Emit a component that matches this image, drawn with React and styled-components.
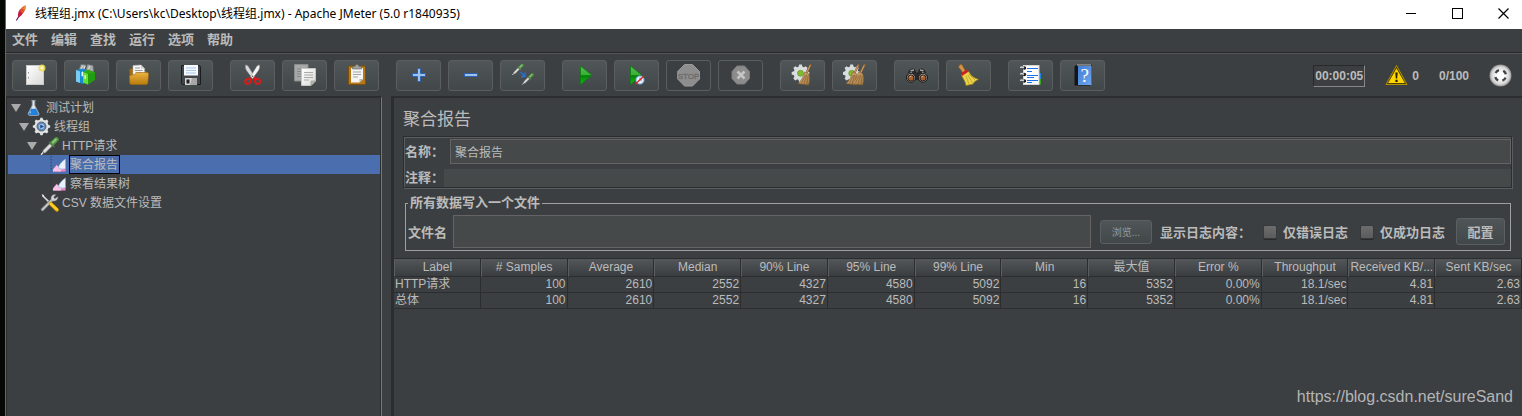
import React, { useState } from "react";
import styled, { createGlobalStyle } from "styled-components";

const GlobalStyle = createGlobalStyle`
  * {
    box-sizing: border-box;
  }

  body {
    margin: 0;
    background: #050805;
    color: #bbbbbb;
    font-family: "Liberation Sans", "Noto Sans CJK SC", sans-serif;
    font-size: 12px;
    overflow: hidden;
  }

  button,
  input {
    font-family: inherit;
    color: inherit;
    margin: 0;
  }
`;

const Gradients = () => (
  <GradientDefs width="0" height="0" aria-hidden="true">
    <defs>
      <linearGradient id="green" x1="0" y1="0" x2="0" y2="1">
        <stop offset="0" stopColor="#4fc34a" />
        <stop offset="0.48" stopColor="#3aae35" />
        <stop offset="0.52" stopColor="#067f08" />
        <stop offset="1" stopColor="#12c416" />
      </linearGradient>
      <linearGradient id="gold" x1="0" y1="0" x2="0" y2="1">
        <stop offset="0" stopColor="#e9b341" />
        <stop offset="1" stopColor="#b97c0c" />
      </linearGradient>
      <linearGradient id="paper" x1="0" y1="0" x2="1" y2="1">
        <stop offset="0" stopColor="#ffffff" />
        <stop offset="1" stopColor="#d9d9d6" />
      </linearGradient>
      <linearGradient id="blue" x1="0" y1="0" x2="1" y2="1">
        <stop offset="0" stopColor="#3f7fd6" />
        <stop offset="1" stopColor="#6fa6ee" />
      </linearGradient>
      <linearGradient id="straw" x1="0" y1="0" x2="1" y2="1">
        <stop offset="0" stopColor="#d8b27c" />
        <stop offset="1" stopColor="#a37843" />
      </linearGradient>
      <radialGradient id="silver">
        <stop offset="0.3" stopColor="#ffffff" />
        <stop offset="0.8" stopColor="#d4d4d4" />
        <stop offset="1" stopColor="#8a8a8a" />
      </radialGradient>
    </defs>
  </GradientDefs>
);

const gearTeeth = [0, 45, 90, 135, 180, 225, 270, 315];

const Gear = ({ x, y, r, fill }) => (
  <g transform={`translate(${x} ${y})`} fill={fill}>
    {gearTeeth.map((a) => (
      <path
        key={a}
        transform={`rotate(${a})`}
        d={`M-2.2 ${-r + 1} L-1.3 ${-r - 2} H1.3 L2.2 ${-r + 1}Z`}
      />
    ))}
    <circle r={r} />
  </g>
);

const Pipette = ({ x = 0, y = 0, s = 1 }) => (
  <g transform={`translate(${x} ${y}) scale(${s})`} strokeLinecap="round">
    <path d="M1 17 L4 13.5" stroke="#e8e8e8" strokeWidth="1.4" />
    <path d="M4 14 L10.5 7.5" stroke="#777" strokeWidth="4" />
    <path d="M4 14 L10.5 7.5" stroke="#dcdedb" strokeWidth="2.6" />
    <path d="M9 5.5 L13 9.5" stroke="#5a6b55" strokeWidth="1.8" />
    <path d="M12 6 L15.5 2.5" stroke="#4f9140" strokeWidth="4.6" />
    <path d="M12 5.5 L15 2.5" stroke="#8cc878" strokeWidth="2" />
  </g>
);

const Broom = ({ x = 0 }) => (
  <g transform={`translate(${x} 0)`}>
    <path d="M19.5 1 L15.5 9" stroke="#8e6231" strokeWidth="2" strokeLinecap="round" />
    <path d="M19.2 1.3 L15.5 9" stroke="#cfa26a" strokeWidth="1" />
    <path d="M13.5 8 L17.5 9.5 C19 13 19 17 17.5 21 L7 19.5 C10 17 12.5 13 13.5 8Z" fill="url(#straw)" stroke="#80582b" strokeWidth="0.5" />
    <path d="M14.5 11 L10.5 19 M15.7 11 L13 20 M17 12 L16 20.5" stroke="#7d5529" strokeWidth="0.6" fill="none" />
  </g>
);

const icons = {
  new: (
    <>
      <rect x="3.5" y="1.5" width="17" height="19" fill="url(#paper)" stroke="#c9c9c9" />
      <path d="M5.5 8 v1.5 M5.5 13 v1.5" stroke="#999" />
      <circle cx="19" cy="4" r="3.5" fill="#f0dd51" opacity="0.85" />
      <circle cx="19" cy="4" r="1.7" fill="#fffcc8" />
    </>
  ),
  templates: (
    <>
      <path d="M4 6 L6 0.5 L11 1 L9 7Z M11 6 L12.5 0.5 L18 1.5 L18.5 8Z" fill="#a9adad" stroke="#707575" strokeWidth="0.6" />
      <path d="M6 5 L8 1.5 M13 5.5 L15 2 M9 5 L10 2" stroke="#e5e5e5" strokeWidth="0.9" />
      <path d="M1 6 L8 4.5 L12 6.5 V18 L8 20 L1 17.5Z" fill="#158bd0" />
      <path d="M1 6 L5 7.5 V19 L1 17.5Z" fill="#7ccaf1" />
      <path d="M6.5 8 L8 7.5 V12 L6.5 12.5Z" fill="#e8f8ff" />
      <path d="M8 8 L13 5.5 L20 8.5 V15.5 L13 20.5 L8 18.5Z" fill="#2eaa15" />
      <path d="M8 8 L13 10 V20.5 L8 18.5Z" fill="#68de35" />
      <path d="M9.5 11 L11 11.5 V15 L9.5 14.5Z" fill="#e5ffd5" />
      <path d="M13 10 L20 8.5 V15.5 L13 20.5Z" fill="#219d10" />
    </>
  ),
  open: (
    <>
      <path d="M2.5 5 L6 4.5 L8 7 H19 V18 H3Z" fill="#a46c10" />
      <path d="M6 1.5 L14 1 L17.5 4.5 V13 H6Z" fill="#f5f5f5" stroke="#bbb" strokeWidth="0.5" />
      <path d="M14 1 V4.5 H17.5" fill="#ccc" />
      <path d="M8 4 H13 M8 6.5 H15.5 M8 9 H15.5" stroke="#999" />
      <path d="M2.5 12 Q3 11 8 10.5 L9.5 8.5 H20 Q22 8.5 21.5 10.5 L20.8 19 Q20.5 20.5 19 20.5 H4.5 Q3 20.5 2.8 19Z" fill="url(#gold)" stroke="#a06c10" strokeWidth="0.6" />
    </>
  ),
  save: (
    <>
      <path d="M2.5 1.5 H20.5 L21.5 3 V20.5 H3.5 L2.5 19Z" fill="#42454a" stroke="#1c1d20" />
      <path d="M5 1 H19 V11.5 H5Z" fill="#f7fbff" />
      <path d="M7 4 H17 M7 6.5 H17 M7 9 H17" stroke="#a5c7e9" />
      <path d="M6 14 H18 V21 H6Z" fill="#d3d3d3" />
      <rect x="7.5" y="15.5" width="3" height="4" fill="#222" />
      <path d="M13 14 H18 V21 H11Z" fill="#a7a7a7" />
    </>
  ),
  cut: (
    <>
      <path d="M9.5 15 L13 13.5 L14 15.5" stroke="#d61b1b" strokeWidth="2.4" fill="none" />
      <path d="M4.8 0.8 Q3.6 3 5.5 6.5 L11.5 14.5 L13.5 12.5 L7 2Z" fill="#dcdcdc" stroke="#8b8b8b" strokeWidth="0.5" />
      <path d="M18.2 0.8 Q19.4 3 17.5 6.5 L11.5 14.5 L9.5 12.5 L16 2Z" fill="#f6f6f6" stroke="#8b8b8b" strokeWidth="0.5" />
      <ellipse cx="7" cy="17.3" rx="2.7" ry="2.4" transform="rotate(-30 7 17.3)" fill="#4a4e50" stroke="#dc1a1a" strokeWidth="2" />
      <ellipse cx="16.5" cy="17.3" rx="2.7" ry="2.4" transform="rotate(30 16.5 17.3)" fill="#4a4e50" stroke="#dc1a1a" strokeWidth="2" />
      <circle cx="11.5" cy="12.3" r="0.8" fill="#555" />
    </>
  ),
  copy: (
    <>
      <path d="M1.5 0.5 H15 V17 H1.5Z" fill="#a7a9a9" stroke="#8a8c8c" />
      <path d="M4 5 H12 M4 7.5 H12 M4 10 H12 M4 12.5 H10" stroke="#858787" />
      <path d="M8.5 4.5 H22.5 V17 L18 21.5 H8.5Z" fill="url(#paper)" stroke="#c4c4c4" />
      <path d="M11 8.5 H20 M11 11 H20 M11 13.5 H20 M11 16 H16" stroke="#aaa" />
      <path d="M22.5 17 H18 V21.5Z" fill="#bdbdb5" stroke="#8d8d87" strokeWidth="0.6" />
    </>
  ),
  paste: (
    <>
      <rect x="3.5" y="2" width="17" height="18.5" rx="1" fill="#b97817" stroke="#7d4f0c" />
      <path d="M6 4 H18 V15 L14.5 18.5 H6Z" fill="#f4f4f4" />
      <path d="M8 8 H16 M8 10.5 H16 M8 13 H13" stroke="#a5a5a5" />
      <path d="M18 15 H14.5 V18.5Z" fill="#b8b8b0" />
      <path d="M7.5 2.5 H10 Q10 0.5 12 0.5 T14 2.5 H16.5 V5 H7.5Z" fill="#a0a29e" stroke="#62645f" strokeWidth="0.6" />
    </>
  ),
  plus: (
    <path d="M10.5 4.5 H13.5 V9.5 H18.5 V12.5 H13.5 V17.5 H10.5 V12.5 H5.5 V9.5 H10.5Z" fill="#9cc3ef" stroke="#2d62b3" />
  ),
  minus: <rect x="5.5" y="9.5" width="13" height="3" fill="#9cc3ef" stroke="#2d62b3" />,
  toggle: (
    <>
      <Pipette x={1} y={-0.5} s={0.66} />
      <Pipette x={11} y={9} s={0.66} />
      <path d="M9.5 8 L13 11.5 M14 8.5 V12.5 H10" stroke="#2370d8" strokeWidth="1.5" fill="none" />
    </>
  ),
  start: <path d="M7.5 2 V20.5 L19 11.2Z" fill="url(#green)" stroke="#0b7c10" strokeWidth="0.8" />,
  startNoPause: (
    <>
      <path d="M5.5 2 V20.5 L17 11.2Z" fill="url(#green)" stroke="#0b7c10" strokeWidth="0.8" />
      <circle cx="15" cy="16" r="4.2" fill="#e4eef8" stroke="#4d88c3" strokeWidth="0.9" />
      <path d="M15 16 V13.5 M15 16 H17" stroke="#446c95" strokeWidth="0.8" />
      <path d="M10.5 20 L19 12" stroke="#db2424" strokeWidth="1.4" />
    </>
  ),
  stop: (
    <>
      <path d="M7.5 0.5 H15.5 L22.5 7.5 V15 L15.5 22 H7.5 L0.7 15 V7.5Z" fill="#8e8e8e" stroke="#9a9a9a" />
      <text x="11.5" y="14.5" textAnchor="middle" fontFamily="Liberation Sans" fontSize="8" fill="#6c6c6c" stroke="#6c6c6c" strokeWidth="0.3">STOP</text>
    </>
  ),
  shutdown: (
    <>
      <path d="M8 2 H15.5 L20.5 7.5 V14.5 L15.5 20 H8 L3 14.5 V7.5Z" fill="#8c8c8c" stroke="#7c7c7c" />
      <path d="M8.5 7.5 L15.5 14.5 M15.5 7.5 L8.5 14.5" stroke="#c5c5c5" strokeWidth="2.6" />
    </>
  ),
  clear: (
    <>
      <Gear x={9.5} y={9.3} r={6.8} fill="#dadddd" />
      <circle cx="9.5" cy="9.3" r="3" fill="#7ebc2e" stroke="#608a39" strokeWidth="0.6" />
      <Broom />
    </>
  ),
  clearAll: (
    <>
      <Gear x={8.7} y={9.3} r={6.8} fill="#dadddd" />
      <circle cx="8.7" cy="9.3" r="3" fill="#7ebc2e" stroke="#608a39" strokeWidth="0.6" />
      <Broom x={-4} />
      <Broom x={2} />
    </>
  ),
  search: (
    <>
      <path d="M4.5 6.5 Q7 3.5 10 6 L10.5 9 H13.5 L14 6 Q17 3.500 19.500 6.500 L23 14 L18 18 L12 15 L6 18 L1 14Z" fill="#2a2c2b" stroke="#1a1b1a" strokeWidth="0.800" />
      <path d="M5.500 6.800 L9 6 M15 6 L18.500 6.800 M3 10.500 L7 8.500 M17 8.500 L21 10.500" stroke="#a4a6a5" strokeWidth="1.400" />
      <circle cx="6" cy="13.700" r="4.500" fill="#8f9190" stroke="#181818" />
      <circle cx="18" cy="13.700" r="4.500" fill="#8f9190" stroke="#181818" />
      <circle cx="6" cy="14" r="3" fill="#a65f31" stroke="#3b2518" />
      <circle cx="18" cy="14" r="3" fill="#a65f31" stroke="#3b2518" />
      <path d="M4.5 13 L6.5 12 M16.5 13 L18.5 12" stroke="#efb484" />
    </>
  ),
  broom: (
    <>
      <path d="M2.5 1 Q4 -0.5 5.5 1.5 L8.5 7 L6 9 L1.5 3Z" fill="#d1934a" stroke="#8a5520" strokeWidth="0.7" />
      <path d="M9.5 6.5 L12 8 C14 12 17 14 21.5 15.5 Q17 17 16 20 L9 21.5 C8.5 17 6 15 4.5 11Z" fill="#ead34b" stroke="#a48614" strokeWidth="0.7" />
      <path d="M9 12 L12 20 M11 11 L15.5 19 M12 10 L18 16" stroke="#b89a1d" strokeWidth="0.7" />
      <path d="M4 9.5 L9.5 5.5 L11.5 7.8 L5 12Z" fill="#d11f20" />
    </>
  ),
  functions: (
    <>
      <path d="M19 9 H22 V15 H19Z" fill="#2088dc" />
      <path d="M19 15 H22 V20.5 H19Z" fill="#35a51c" />
      <rect x="4.5" y="1.5" width="15.5" height="19" fill="#fff" stroke="#d3d3d3" />
      <path d="M8 4.500 H19 M8 7.500 H13 M8 11.500 H19 M8 13.500 H15 M8 16.500 H19 M8 18.500 H13" stroke="#1b70e2" />
      {[4, 10.5, 17].map((y) => (
        <g key={y}>
          <circle cx="5.5" cy={y} r="1.7" fill="#181818" />
          <path d={`M1.5 ${y} Q2 ${y - 2} 5 ${y}`} stroke="#d6d6d6" strokeWidth="1.3" fill="none" />
        </g>
      ))}
    </>
  ),
  help: (
    <>
      <path d="M3.5 2.5 L6 0.5 H20.5 V19 L19 21.5 H3.5Z" fill="#141518" />
      <path d="M6 1 H20" stroke="#ccd0d6" />
      <rect x="7" y="2" width="13.5" height="19" fill="url(#blue)" />
      <text x="13.7" y="18" textAnchor="middle" fontFamily="Liberation Serif" fontSize="19" fill="#fff">?</text>
    </>
  ),
  feather: (
    <>
      <path d="M4.5 21 L10 12" stroke="#622670" strokeWidth="1.6" />
      <path d="M7 17 C6 11 8 8 10 5 L14 10 C12 13 10 16 7 17Z" fill="#c01d49" />
      <path d="M9.5 8 C11 4 13 2 17 0.5 C18 5 16 8 13 12Z" fill="#e15428" />
      <path d="M13 5 Q14 3 17 0.5 Q18 4 15.5 6Z" fill="#e9942b" />
    </>
  ),
  flask: (
    <>
      <path d="M9 3 H14 M10 3 V9 L5 19 Q5 21 7 21 H16.5 Q18.5 21 18 19 L13 9 V3" fill="#e3eaee" stroke="#9aa5ab" strokeWidth="1.2" />
      <path d="M8.5 13 H14.5 L17.5 19 Q17.5 20.5 16 20.5 H7 Q5.5 20.5 5.5 19Z" fill="#2181dd" />
      <path d="M6.5 18 L8 15 V19Z" fill="#b5dcfb" />
    </>
  ),
  gear: (
    <>
      <Gear x={11.5} y={11.5} r={8.5} fill="#e0e2e3" />
      <circle cx="11.5" cy="11.5" r="5.5" fill="#5f88b8" stroke="#50585f" />
      <circle cx="11.5" cy="11.5" r="3.3" fill="#9cc1e9" />
      <path d="M10 9 L14.5 11.5 L10 14Z" fill="#254c87" />
    </>
  ),
  pipette: <Pipette x={0.5} y={1} s={1.25} />,
  report: (
    <>
      <path d="M1.5 0 V21" stroke="#30343a" strokeDasharray="2 2" />
      <path d="M4 21 V18 L9 12 L13 16 L21 15 V21Z" fill="#f18acb" />
      <path d="M4 19 L9 13 L15 18 V21 H4Z" fill="#fbc3e5" />
      <path d="M11 16 C13 11 15 8 21 4 V17 Q16 19 11 16Z" fill="#e9f2fb" stroke="#7ba8d1" strokeWidth="0.7" />
    </>
  ),
  tools: (
    <>
      <path d="M3 3 L12 12" stroke="#d9d9d9" strokeWidth="2" />
      <path d="M2 1.5 L5 2.5 L4 5Z" fill="#eee" />
      <path d="M3 20 L15 8" stroke="#777" strokeWidth="4" strokeLinecap="round" />
      <path d="M3 20 L15 8" stroke="#c9cbcb" strokeWidth="2.2" strokeLinecap="round" />
      <path d="M14 9 C12 5 15 1 19 2 L16.5 5 L18 7 L21.5 4.5 C22.5 8 18 11 14 9Z" fill="#d4d6d6" stroke="#808383" strokeWidth="0.6" />
      <path d="M13 13 L20.5 20.5" stroke="#c58e05" strokeWidth="4.6" strokeLinecap="round" />
      <path d="M13 13 L20.5 20" stroke="#ffce22" strokeWidth="3" strokeLinecap="round" />
    </>
  ),
  warning: (
    <>
      <path d="M11.5 1.5 L22 20.5 H1Z" fill="#4f4100" stroke="#b09100" strokeWidth="1" strokeLinejoin="round" />
      <path d="M11.5 4.5 L19.8 19 H3.2Z" fill="#ffd500" />
      <path d="M10.3 8.5 H12.7 L12.2 14.5 H10.8Z M10.4 15.8 H12.6 V18 H10.4Z" fill="#211c00" />
    </>
  ),
  remote: (
    <>
      <circle cx="11.5" cy="11.5" r="11" fill="url(#silver)" />
      <circle cx="11.5" cy="11.5" r="5.5" fill="none" stroke="#404446" strokeWidth="2.4" strokeDasharray="4.2 4.440" strokeDashoffset="-2.220" />
    </>
  ),
};

const Icon = ({ name, size = 23 }) => (
  <IconSvg width={size} height={size} viewBox="0 0 23 23" aria-hidden="true">
    {icons[name]}
  </IconSvg>
);

const menus = ["文件", "编辑", "查找", "运行", "选项", "帮助"];

const toolGroups = [
  ["new", "templates", "open", "save"],
  ["cut", "copy", "paste"],
  ["plus", "minus", "toggle"],
  ["start", "startNoPause", "stop", "shutdown"],
  ["clear", "clearAll"],
  ["search", "broom"],
  ["functions", "help"],
];

const disabledTools = ["stop", "shutdown"];

const treeNodes = [
  { text: "测试计划", icon: "flask", level: 0, open: true },
  { text: "线程组", icon: "gear", level: 1, open: true },
  { text: "HTTP请求", icon: "pipette", level: 2, open: true },
  { text: "聚合报告", icon: "report", level: 3, leaf: true },
  { text: "察看结果树", icon: "report", level: 3, leaf: true },
  { text: "CSV 数据文件设置", icon: "tools", level: 2 },
];

const columns = [
  "Label",
  "# Samples",
  "Average",
  "Median",
  "90% Line",
  "95% Line",
  "99% Line",
  "Min",
  "最大值",
  "Error %",
  "Throughput",
  "Received KB/...",
  "Sent KB/sec",
];

const stats = ["100", "2610", "2552", "4327", "4580", "5092", "16", "5352", "0.00%", "18.1/sec", "4.81", "2.63"];

const rows = [
  ["HTTP请求", ...stats],
  ["总体", ...stats],
];

const App = () => {
  const [selected, setSelected] = useState("聚合报告");
  const [name, setName] = useState("聚合报告");

  return (
    <Desktop>
      <GlobalStyle />
      <Gradients />
      <Window>
        <TitleBar>
          <Icon name="feather" size={17} />
          <WindowTitle>线程组.jmx (C:\Users\kc\Desktop\线程组.jmx) - Apache JMeter (5.0 r1840935)</WindowTitle>
          <WindowButtons>
            <WindowButton aria-label="Minimize">
              <svg width="11" height="11"><path d="M0 5.5 H10" stroke="#000" /></svg>
            </WindowButton>
            <WindowButton aria-label="Maximize">
              <svg width="11" height="11"><rect x="0.5" y="0.5" width="10" height="10" fill="none" stroke="#000" /></svg>
            </WindowButton>
            <WindowButton aria-label="Close">
              <svg width="11" height="11"><path d="M0.5 0.5 L10.5 10.5 M10.5 0.5 L0.5 10.5" stroke="#000" strokeWidth="1.2" /></svg>
            </WindowButton>
          </WindowButtons>
        </TitleBar>

        <MenuBar>
          {menus.map((text) => (
            <MenuButton key={text}>{text}</MenuButton>
          ))}
        </MenuBar>

        <Toolbar>
          {toolGroups.map((group) => (
            <ToolGroup key={group[0]}>
              {group.map((tool) => (
                <ToolButton key={tool} aria-label={tool} disabled={disabledTools.includes(tool)}>
                  <Icon name={tool} />
                </ToolButton>
              ))}
            </ToolGroup>
          ))}
          <Status>
            <Timer>00:00:05</Timer>
            <Warnings>
              <Icon name="warning" />
              <span>0</span>
            </Warnings>
            <span>0/100</span>
            <Icon name="remote" />
          </Status>
        </Toolbar>

        <Main>
          <Tree>
            {treeNodes.map((node) => (
              <TreeRow
                key={node.text}
                $level={node.level}
                $leaf={node.leaf}
                $selected={selected === node.text}
                onClick={() => setSelected(node.text)}
              >
                <Arrow $visible={node.open} viewBox="0 0 10 10">
                  <path d="M0 1 H10 L5 9Z" fill="#aaaaaa" />
                </Arrow>
                <Icon name={node.icon} size={node.leaf ? 17 : 19} />
                <TreeLabel $selected={selected === node.text}>{node.text}</TreeLabel>
              </TreeRow>
            ))}
          </Tree>

          <Content>
            <Heading>聚合报告</Heading>

            <NamePanel>
              <FieldRow $gap="6px">
                <label htmlFor="name">名称：</label>
                <NameInput id="name" value={name} onChange={(e) => setName(e.target.value)} />
              </FieldRow>
              <FieldRow $gap="0">
                <label htmlFor="comment">注释：</label>
                <CommentInput id="comment" />
              </FieldRow>
            </NamePanel>

            <FilePanel>
              <legend>所有数据写入一个文件</legend>
              <FileRow>
                <label htmlFor="file">文件名</label>
                <FileInput id="file" />
                <BrowseButton>浏览...</BrowseButton>
                <LogLabel>显示日志内容：</LogLabel>
                <CheckLabel>
                  <CheckBox type="checkbox" />
                  仅错误日志
                </CheckLabel>
                <CheckLabel>
                  <CheckBox type="checkbox" />
                  仅成功日志
                </CheckLabel>
                <ConfigButton>配置</ConfigButton>
              </FileRow>
            </FilePanel>

            <Table>
              <thead>
                <tr>
                  {columns.map((text) => (
                    <th key={text}>{text}</th>
                  ))}
                </tr>
              </thead>
              <tbody>
                {rows.map((row) => (
                  <tr key={row[0]}>
                    {row.map((value, i) => (
                      <td key={columns[i]}>{value}</td>
                    ))}
                  </tr>
                ))}
              </tbody>
            </Table>
          </Content>
        </Main>
      </Window>
      <Watermark>https://blog.csdn.net/sureSand</Watermark>
    </Desktop>
  );
};

export default App;

const GradientDefs = styled.svg`
  position: absolute;
`;

const IconSvg = styled.svg`
  display: block;
  flex: none;
`;

const Desktop = styled.div`
  position: relative;
  min-height: 100vh;
  display: flex;
  padding-left: 5px;
`;

const Window = styled.div`
  flex: 1;
  min-width: 0;
  display: flex;
  flex-direction: column;
  border-left: 1px solid #1d78c1;
  background: #3c3f41;
`;

const TitleBar = styled.header`
  display: flex;
  align-items: center;
  height: 29px;
  padding: 0 8px 2px 7px;
  background: #ffffff;
  color: #000000;
`;

const WindowTitle = styled.span`
  flex: 1;
  padding-left: 5px;
  font-family: "Noto Sans", "Noto Sans CJK SC", sans-serif;
  font-size: 12px;
  line-height: 20px;
`;

const WindowButtons = styled.div`
  display: flex;
  gap: 25px;
`;

const WindowButton = styled.button`
  display: flex;
  align-items: center;
  justify-content: center;
  width: 21px;
  height: 21px;
  padding: 0;
  border: 0;
  background: none;
`;

const MenuBar = styled.nav`
  display: flex;
  align-items: center;
  gap: 13px;
  height: 24px;
  padding: 0 0 1px 6px;
  border-bottom: 1px solid #282828;
`;

const MenuButton = styled.button`
  padding: 0;
  border: 0;
  background: none;
  font-size: 13px;
  font-weight: bold;
  line-height: 20px;
`;

const Toolbar = styled.div`
  display: flex;
  align-items: center;
  gap: 17px;
  padding: 6px 10px 5px 6px;
  border-top: 1px solid #555555;
`;

const ToolGroup = styled.div`
  display: flex;
  gap: 7px;
`;

const ToolButton = styled.button`
  display: flex;
  align-items: center;
  justify-content: center;
  width: 45px;
  height: 31px;
  padding: 0;
  border: 1px solid #5a5e5f;
  border-radius: 3px;
  background: linear-gradient(#505658, #424849);

  &:disabled {
    background: none;
  }
`;

const Status = styled.div`
  display: flex;
  align-items: center;
  margin-left: auto;
  gap: 20px;
  font-weight: bold;
`;

const Timer = styled.span`
  padding: 0 1px;
  line-height: 20px;
  border: 1px solid;
  border-color: #27292a #888888 #888888 #27292a;
`;

const Warnings = styled.span`
  display: flex;
  align-items: center;
  gap: 4px;
`;

const Main = styled.main`
  flex: 1;
  display: flex;
  gap: 9px;
`;

const Tree = styled.div`
  flex: 0 0 376px;
  padding-left: 1px;
  border: solid #2b2d2f;
  border-width: 2px 1px 0;
  box-shadow: inset -1px 0 0 #2b2d2f;
  border-right-color: #77797a;
`;

const TreeRow = styled.div`
  display: flex;
  align-items: center;
  height: 19px;
  padding-left: ${({ $level, $leaf }) => ($leaf ? 29 : 3 + $level * 8)}px;
  margin-right: 1px;
  background: ${({ $selected }) => ($selected ? "#4b6eaf" : "none")};
  cursor: default;
`;

const Arrow = styled.svg`
  width: 10px;
  height: 10px;
  margin-right: 3px;
  visibility: ${({ $visible }) => ($visible ? "visible" : "hidden")};
`;

const TreeLabel = styled.span`
  margin-left: 2px;
  padding: 2px 1px 0 0;
  line-height: 15px;
  border: 1px solid ${({ $selected }) => ($selected ? "#000000" : "transparent")};
`;

const Content = styled.section`
  flex: 1;
  min-width: 0;
  border: solid #2b2d2f;
  border-width: 2px 0 0 3px;
`;

const Heading = styled.h1`
  margin: 9px 10px 4px 9px;
  font-size: 17px;
  font-weight: normal;
  line-height: 25px;
`;

const NamePanel = styled.div`
  display: grid;
  gap: 5px;
  margin: 0 10px 7px 9px;
  padding: 2px 0 0 1px;
  border: 1px solid #2b2d2f;
  box-shadow: 1px 1px 0 #5a5d5e, inset 1px 1px 0 #5a5d5e;
  font-size: 13px;
  font-weight: bold;
`;

const FieldRow = styled.div`
  display: flex;
  align-items: center;
  gap: ${({ $gap }) => $gap};

  label {
    line-height: 18px;
  }
`;

const TextInput = styled.input`
  flex: 1;
  min-width: 0;
  padding: 0 4px;
  border: 1px solid #646464;
  background: #45494a;
  font-size: 12px;
  outline: none;
`;

const NameInput = styled(TextInput)`
  height: 25px;
`;

const CommentInput = styled(TextInput)`
  height: 18px;
  border: 0;
`;

const FilePanel = styled.fieldset`
  min-width: 0;
  margin: 0 11px 7px;
  padding: 0 5px 2px 2px;
  border: 1px solid #a0a0a0;
  font-size: 13px;
  font-weight: bold;

  legend {
    padding: 0 2px;
    line-height: 16px;
  }
`;

const FileRow = styled.div`
  display: flex;
  align-items: center;
  padding-top: 4px;
  white-space: nowrap;
`;

const FileInput = styled(TextInput)`
  height: 33px;
  margin: 0 9px 0 6px;
`;

const PanelButton = styled.button`
  padding: 0;
  border: 1px solid #5a6062;
  border-radius: 3px;
  background: linear-gradient(#505658, #424849);
`;

const BrowseButton = styled(PanelButton)`
  width: 52px;
  height: 24px;
  color: #999999;
  font-size: 10px;
`;

const ConfigButton = styled(PanelButton)`
  width: 49px;
  height: 27px;
  margin-left: 11px;
  font-size: 13px;
  font-weight: bold;
`;

const LogLabel = styled.span`
  margin-left: 8px;
`;

const CheckLabel = styled.label`
  display: flex;
  align-items: center;
  gap: 6px;
  margin-left: 12px;
`;

const CheckBox = styled.input`
  appearance: none;
  width: 14px;
  height: 14px;
  border: 1px solid #37393a;
  border-radius: 2px;
  background: linear-gradient(#6c6c6c, #5c5c5c);
  box-shadow: 0 1px 0 #27292a;
`;

const Table = styled.table`
  width: 100%;
  table-layout: fixed;
  border-spacing: 0;
  border-top: 1px solid #2b2d2f;
  font-size: 12px;
  line-height: 15px;

  th,
  td {
    padding: 0 1px;
    border-right: 1px solid #2b2d2f;
    border-bottom: 1px solid #2b2d2f;
    white-space: nowrap;
  }

  th {
    height: 18px;
    padding: 0;
    border-left: 1px solid #5b5e60;
    background: linear-gradient(#53575a, #3a3d3f);
    font-weight: normal;
  }

  td {
    height: 16px;
    text-align: right;
  }

  td:first-child {
    text-align: left;
  }
`;

const Watermark = styled.div`
  position: absolute;
  right: 9px;
  bottom: 9px;
  color: #b4b5b6;
  font-size: 16px;
  line-height: 20px;
`;
